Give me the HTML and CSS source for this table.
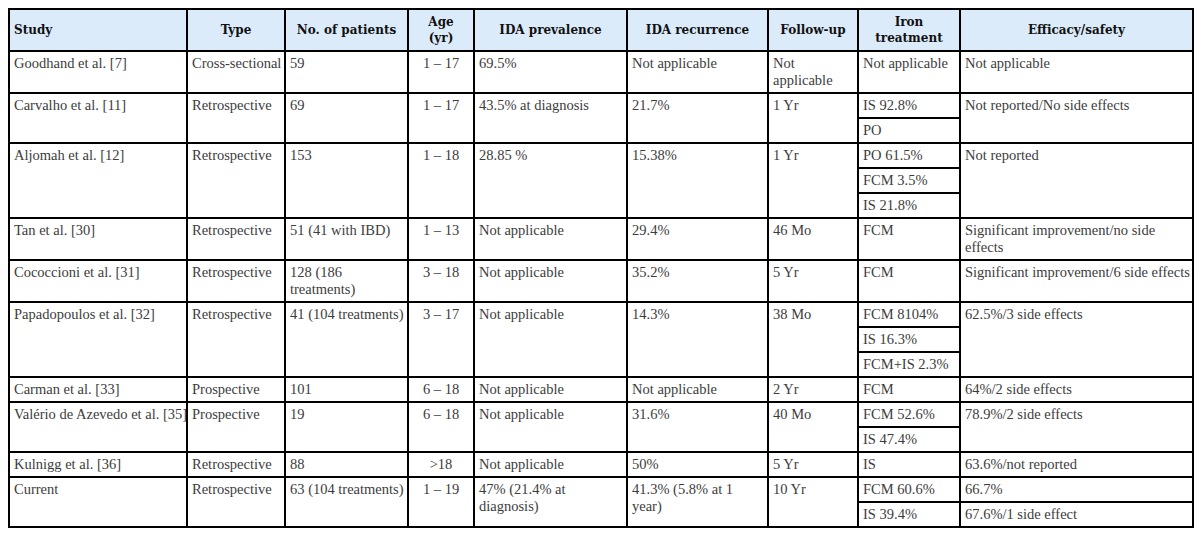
FILE: index.html
```html
<!DOCTYPE html>
<html>
<head>
<meta charset="utf-8">
<link rel="stylesheet" href="styles.css">
</head>
<body>
<table class="tbl">
  <colgroup>
    <col class="c-study"><col class="c-type"><col class="c-pat"><col class="c-age"><col class="c-prev"><col class="c-rec"><col class="c-fu"><col class="c-iron"><col class="c-eff">
  </colgroup>
  <thead>
    <tr>
      <th class="left">Study</th>
      <th>Type</th>
      <th>No. of patients</th>
      <th>Age<br>(yr)</th>
      <th>IDA prevalence</th>
      <th>IDA recurrence</th>
      <th>Follow-up</th>
      <th>Iron<br>treatment</th>
      <th>Efficacy/safety</th>
    </tr>
  </thead>
  <tbody>
    <tr>
      <td>Goodhand et al. [7]</td>
      <td class="nw">Cross-sectional</td>
      <td>59</td>
      <td class="center">1 – 17</td>
      <td>69.5%</td>
      <td>Not applicable</td>
      <td>Not applicable</td>
      <td class="nw">Not applicable</td>
      <td>Not applicable</td>
    </tr>
    <tr>
      <td rowspan="2">Carvalho et al. [11]</td>
      <td rowspan="2">Retrospective</td>
      <td rowspan="2">69</td>
      <td rowspan="2" class="center">1 – 17</td>
      <td rowspan="2">43.5% at diagnosis</td>
      <td rowspan="2">21.7%</td>
      <td rowspan="2">1 Yr</td>
      <td>IS 92.8%</td>
      <td rowspan="2">Not reported/No side effects</td>
    </tr>
    <tr><td>PO</td></tr>
    <tr>
      <td rowspan="3">Aljomah et al. [12]</td>
      <td rowspan="3">Retrospective</td>
      <td rowspan="3">153</td>
      <td rowspan="3" class="center">1 – 18</td>
      <td rowspan="3">28.85 %</td>
      <td rowspan="3">15.38%</td>
      <td rowspan="3">1 Yr</td>
      <td>PO 61.5%</td>
      <td rowspan="3">Not reported</td>
    </tr>
    <tr><td>FCM 3.5%</td></tr>
    <tr><td>IS 21.8%</td></tr>
    <tr>
      <td>Tan et al. [30]</td>
      <td>Retrospective</td>
      <td>51 (41 with IBD)</td>
      <td class="center">1 – 13</td>
      <td>Not applicable</td>
      <td>29.4%</td>
      <td>46 Mo</td>
      <td>FCM</td>
      <td>Significant improvement/no side effects</td>
    </tr>
    <tr>
      <td>Cococcioni et al. [31]</td>
      <td>Retrospective</td>
      <td>128 (186 treatments)</td>
      <td class="center">3 – 18</td>
      <td>Not applicable</td>
      <td>35.2%</td>
      <td>5 Yr</td>
      <td>FCM</td>
      <td class="nw">Significant improvement/6 side effects</td>
    </tr>
    <tr>
      <td rowspan="3">Papadopoulos et al. [32]</td>
      <td rowspan="3">Retrospective</td>
      <td rowspan="3" class="nw">41 (104 treatments)</td>
      <td rowspan="3" class="center">3 – 17</td>
      <td rowspan="3">Not applicable</td>
      <td rowspan="3">14.3%</td>
      <td rowspan="3">38 Mo</td>
      <td>FCM 8104%</td>
      <td rowspan="3">62.5%/3 side effects</td>
    </tr>
    <tr><td>IS 16.3%</td></tr>
    <tr><td>FCM+IS 2.3%</td></tr>
    <tr>
      <td>Carman et al. [33]</td>
      <td>Prospective</td>
      <td>101</td>
      <td class="center">6 – 18</td>
      <td>Not applicable</td>
      <td>Not applicable</td>
      <td>2 Yr</td>
      <td>FCM</td>
      <td>64%/2 side effects</td>
    </tr>
    <tr>
      <td rowspan="2" class="clip">Valério de Azevedo et al. [35]</td>
      <td rowspan="2">Prospective</td>
      <td rowspan="2">19</td>
      <td rowspan="2" class="center">6 – 18</td>
      <td rowspan="2">Not applicable</td>
      <td rowspan="2">31.6%</td>
      <td rowspan="2">40 Mo</td>
      <td>FCM 52.6%</td>
      <td rowspan="2">78.9%/2 side effects</td>
    </tr>
    <tr><td>IS 47.4%</td></tr>
    <tr>
      <td>Kulnigg et al. [36]</td>
      <td>Retrospective</td>
      <td>88</td>
      <td class="center">&gt;18</td>
      <td>Not applicable</td>
      <td>50%</td>
      <td>5 Yr</td>
      <td>IS</td>
      <td>63.6%/not reported</td>
    </tr>
    <tr>
      <td rowspan="2">Current</td>
      <td rowspan="2">Retrospective</td>
      <td rowspan="2" class="nw">63 (104 treatments)</td>
      <td rowspan="2" class="center">1 – 19</td>
      <td rowspan="2">47% (21.4% at diagnosis)</td>
      <td rowspan="2">41.3% (5.8% at 1 year)</td>
      <td rowspan="2">10 Yr</td>
      <td>FCM 60.6%</td>
      <td>66.7%</td>
    </tr>
    <tr><td>IS 39.4%</td><td>67.6%/1 side effect</td></tr>
  </tbody>
</table>
</body>
</html>
```
FILE: styles.css
```css
html, body {
  margin: 0;
  padding: 0;
  background: #ffffff;
}
body {
  padding: 8px;
  font-family: "Liberation Serif", "DejaVu Serif", serif;
}
.tbl {
  width: 100%;
  border-collapse: collapse;
  table-layout: fixed;
  border: 2px solid #000;
  font-size: 14.5px;
  color: #3c3c3c;
}
.c-study { width: 178px; }
.c-type { width: 98px; }
.c-pat { width: 123px; }
.c-age { width: 66px; }
.c-prev { width: 153px; }
.c-rec { width: 141px; }
.c-fu { width: 90px; }
.c-iron { width: 102px; }
.c-eff { width: 233px; }
.tbl th, .tbl td {
  border: 2px solid #000;
  vertical-align: top;
  padding: 3px 4px;
  line-height: 17px;
  text-align: left;
  font-weight: normal;
}
.tbl th {
  background: #dcebfa;
  color: #111;
  font-family: "DejaVu Serif", "Liberation Serif", serif;
  font-size: 12px;
  font-weight: bold;
  text-align: center;
  vertical-align: middle;
  line-height: 16px;
  padding: 4px 4px;
}
.tbl th.left { text-align: left; }
.tbl td.center { text-align: center; }
.tbl td.nw { white-space: nowrap; }
.tbl td.clip {
  white-space: nowrap;
  overflow: hidden;
}
```
